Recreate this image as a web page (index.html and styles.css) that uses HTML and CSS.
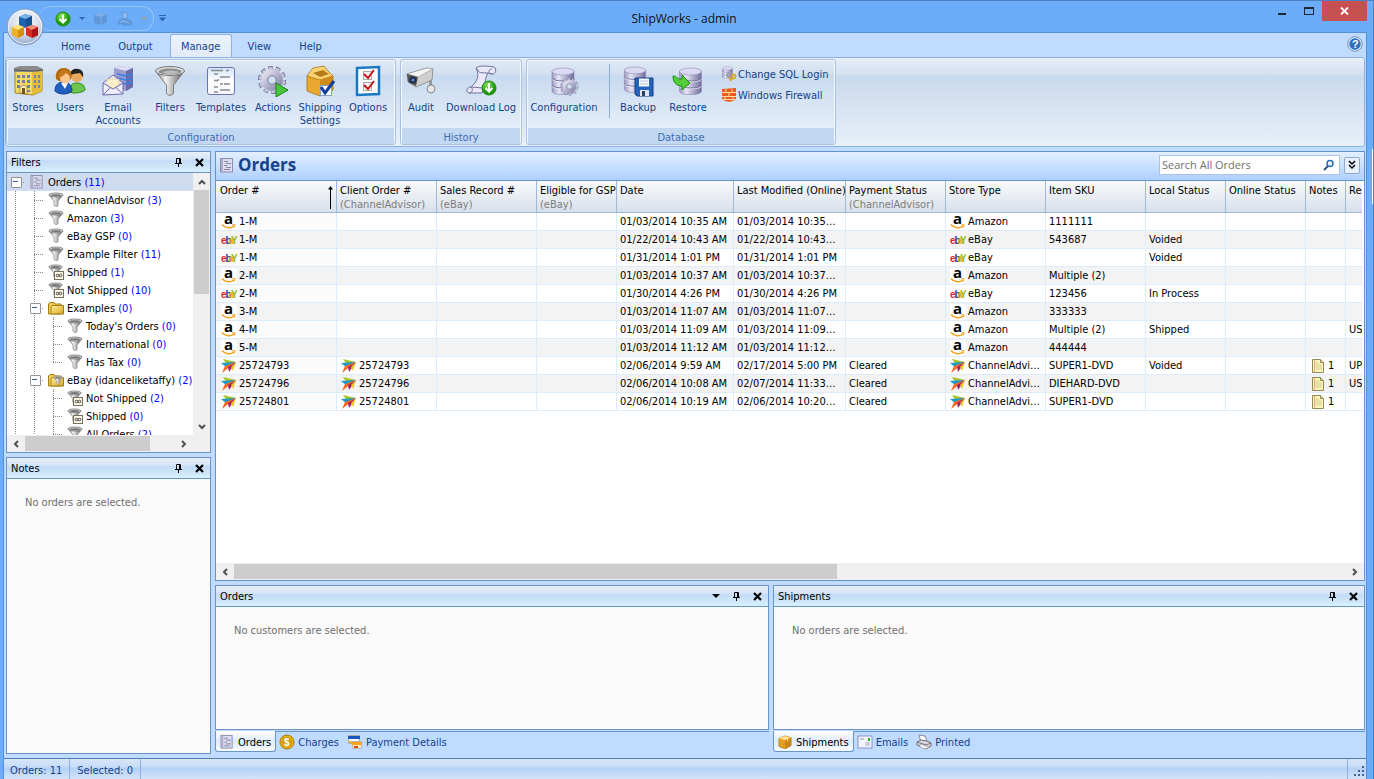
FILE: index.html
```html
<!DOCTYPE html>
<html lang="en">
<head>
<meta charset="utf-8">
<title>ShipWorks - admin</title>
<link rel="stylesheet" href="styles.css">
</head>
<body>
<svg class="defs" width="0" height="0" aria-hidden="true">
  <defs>
    <linearGradient id="gMetal"><stop offset="0" stop-color="#777"/><stop offset=".35" stop-color="#f4f4f4"/><stop offset="1" stop-color="#555"/></linearGradient>
    <linearGradient id="gDb"><stop offset="0" stop-color="#9b98bd"/><stop offset=".3" stop-color="#e6e5f6"/><stop offset="1" stop-color="#716c9c"/></linearGradient>
    <linearGradient id="gGear" x2="1" y2="1"><stop offset="0" stop-color="#e2e2f0"/><stop offset="1" stop-color="#8a88ac"/></linearGradient>
    <radialGradient id="gGreen" cx=".4" cy=".3"><stop offset="0" stop-color="#8be95c"/><stop offset="1" stop-color="#1f9a0c"/></radialGradient>
    <linearGradient id="gGold" x2="1" y2="1"><stop offset="0" stop-color="#fff3a0"/><stop offset="1" stop-color="#d9a21c"/></linearGradient>
    <radialGradient id="gOrb" cx=".5" cy=".3" r=".7"><stop offset="0" stop-color="#fff"/><stop offset=".6" stop-color="#d3dceb"/><stop offset="1" stop-color="#8ea6c8"/></radialGradient>
    <linearGradient id="gPage" x2="0" y2="1"><stop offset="0" stop-color="#cfe6fb"/><stop offset=".5" stop-color="#fff"/><stop offset="1" stop-color="#f4f4fb"/></linearGradient>
  </defs>
  <symbol id="i-orb" viewBox="0 0 38 38">
    <circle cx="19" cy="19" r="18" fill="url(#gOrb)" stroke="#7f9bc4"/><circle cx="19" cy="19" r="16.500" fill="none" stroke="#fff" stroke-opacity=".8"/>
    <path d="M13 9l6-3 7 2v9l-7 3-6-3z" fill="#1c62ad"/><path d="M13 9l6-3 7 2-6 3z" fill="#7ab4e6"/><path d="M20 11l6-3v9l-6 3z" fill="#134f93"/>
    <path d="M6 19l6-2 6 2v8l-6 3-6-3z" fill="#f0b020"/><path d="M6 19l6-2 6 2-6 3z" fill="#ffe57a"/><path d="M12 22l6-3v8l-6 3z" fill="#d68f10"/>
    <path d="M20 19l6-2 6 2v8l-6 3-6-3z" fill="#d92a20"/><path d="M20 19l6-2 6 2-6 3z" fill="#f68a7c"/><path d="M26 22l6-3v8l-6 3z" fill="#ad1212"/>
  </symbol>
  <symbol id="i-down" viewBox="0 0 16 16"><circle cx="8" cy="8" r="7" fill="url(#gGreen)" stroke="#1b8a12"/><path d="M8 3.500v8M4.500 8L8 11.500 11.500 8" fill="none" stroke="#fff" stroke-width="2"/></symbol>
  <symbol id="i-ghostbox" viewBox="0 0 16 16"><path d="M1 4l7-2 6 1v8l-6 3-7-2z" fill="#5f97d8"/><path d="M1 4l7-2 6 1-6 3z" fill="#7fb1ec"/><path d="M8 6v8" stroke="#79aae6" fill="none"/></symbol>
  <symbol id="i-ghostprint" viewBox="0 0 18 16"><path d="M5 1l5 1 1 5-5 1z" fill="#8bb9f0" stroke="#6799d6"/><path d="M1 10l4-3 6 1 5 3-2 4-4-1-3 1-2-2-4 1z" fill="#5f97d8"/><path d="M3 11l4-1 5 2" stroke="#94c0f3" fill="none"/></symbol>
  <symbol id="i-stores" viewBox="0 0 32 32">
    <path d="M3 4l18-1 9 2v21l-9 4-18-2z" fill="#f6d865" stroke="#a8842a"/><path d="M20 5l10 1v20l-10 4z" fill="#e5bb3c"/><path d="M2 3l6-2h17l6 3v2l-10 1H2z" fill="#8b8b8b"/><path d="M2 5l19 1 10-1" stroke="#555" fill="none"/>
    <path d="M5 10h3v3H5zM10 10h3v3h-3zM15 10h3v3h-3zM5 15h3v3H5zM10 15h3v3h-3zM15 15h3v3h-3zM5 20h3v3H5zM15 20h3v3h-3zM22 10h2v3h-2zM26 10h2v3h-2zM22 15h2v3h-2zM26 15h2v3h-2zM22 20h2v3h-2zM26 20h2v3h-2zM15 25h3v2h-3z" fill="#6f82a8"/>
    <path d="M8 22l4-2 3 2v7l-7-1z" fill="#fff0b0" stroke="#80621a" stroke-width=".6"/><path d="M10 23h3v6h-3z" fill="#71531a"/>
  </symbol>
  <symbol id="i-users" viewBox="0 0 32 32">
    <path d="M15 27c0-6 3-9 8-9s8 3 8 7c-3 3-12 4-16 2z" fill="#6cc54c" stroke="#2e8a23"/><circle cx="23" cy="11" r="6" fill="#e9a85d"/><path d="M16 11c0-5 3-8 8-7 4 0 6 4 5 8l-3-4c-4 1-7 0-10 3z" fill="#222"/>
    <path d="M1 26c0-7 4-9 9-9s8 4 8 9c-4 4-13 4-17 0z" fill="#1f5fc0" stroke="#133d8b"/><path d="M7 18l4 6 3-6z" fill="#f3f6fc"/><path d="M2 14C1 7 4 3 10 3s9 5 7 11l-3 2H5z" fill="#b36a12"/><ellipse cx="11" cy="13" rx="5" ry="5.500" fill="#ffc58c"/><path d="M5 12c3 0 5-2 7-4l4 3c0-5-3-6-6-6s-6 3-5 7z" fill="#c47a1a"/>
  </symbol>
  <symbol id="i-email" viewBox="0 0 32 32">
    <path d="M12 3l6-2 13 2v19l-7 4-12-3z" fill="#9b9bce"/><path d="M12 3l6-2 13 2-7 3z" fill="#dcdcf2"/><path d="M24 6l7-3v19l-7 4z" fill="#6b6aab"/><path d="M15 9l9 2 6-2M15 13l9 2 6-2M17 17l7 2 6-2" stroke="#3a7fe0" stroke-width="1.500" fill="none"/>
    <path d="M1 18l10-8 10 8v11l-20 1z" fill="#eeeefb" stroke="#6d6bb0"/><path d="M5 14h12v6l-6 4-6-4z" fill="#fff0cc" stroke="#d6ba88" stroke-width=".6"/><path d="M1 18l10 6 10-6M1 30l8-8M21 29l-8-7" fill="none" stroke="#6d6bb0"/>
  </symbol>
  <symbol id="i-funnel" viewBox="0 0 32 32"><path d="M1.500 6l11 14v8c1 3 6 3 7 0v-8l11-14z" fill="url(#gMetal)" stroke="#666" stroke-width=".8"/><ellipse cx="16" cy="6" rx="14.500" ry="4.500" fill="#ddd" stroke="#777"/><ellipse cx="16" cy="6.500" rx="11.500" ry="3" fill="#8b8b8b"/><path d="M8 7c5 3 11 3 17 0-5-2-11-2-17 0z" fill="#bbb"/></symbol>
  <symbol id="i-template" viewBox="0 0 32 32"><rect x="2.500" y="2.500" width="27" height="27" rx="2" fill="url(#gPage)" stroke="#6d73b0"/><path d="M6 5.500h12M21 5.500h3M9 9h4M15 12h10M12 15h2M9 15.500h4M15 19h3M19 19h6M9 22h4M15 25h10M9 27h4" stroke="#8a8a90" stroke-width="1.600"/></symbol>
  <symbol id="gear" viewBox="0 0 32 32"><circle cx="16" cy="16" r="12.500" fill="none" stroke="#77759c" stroke-width="5" pathLength="20" stroke-dasharray="1.200 .8"/><circle cx="16" cy="16" r="12" fill="none" stroke="#c7c6dd" stroke-width="4" pathLength="20" stroke-dasharray="1 1" stroke-dashoffset="-.1"/><circle cx="16" cy="16" r="8" fill="none" stroke="url(#gGear)" stroke-width="7"/><circle cx="16" cy="16" r="4.500" fill="#d2dff0" stroke="#77759c"/></symbol>
  <symbol id="i-actions" viewBox="0 0 32 32"><use href="#gear" width="30" height="30"/><path d="M19 18l12 7-12 7z" fill="#47c63c" stroke="#188515"/></symbol>
  <symbol id="i-shipping" viewBox="0 0 32 32"><path d="M3 11l12-3 14 3v14l-13 6-13-5z" fill="#eaa92e" stroke="#9a6510" stroke-width=".7"/><path d="M5 8l4-5 11-2 4 5 5 5-13 4-13-4z" fill="#fbd471" stroke="#9a6510" stroke-width=".7"/><path d="M9 8l10-3 6 4-9 3z" fill="#b47b18"/><path d="M16 15l13-4v14l-13 6z" fill="#d08b18"/><rect x="16.500" y="20.500" width="11" height="10" fill="#f6faff" stroke="#8ba1bd"/><path d="M17 22l4 6 9-12" fill="none" stroke="#113d9b" stroke-width="3"/></symbol>
  <symbol id="i-options" viewBox="0 0 32 32"><path d="M5 3l22-1v27l-22 1z" fill="#fff" stroke="#1979c4" stroke-width="2.500"/><rect x="11.500" y="6.500" width="8" height="8" fill="#f4f4f4" stroke="#aaa"/><rect x="11.500" y="17.500" width="8" height="8" fill="#f4f4f4" stroke="#aaa"/><path d="M12 9l4 4 6-8M12 20l4 4 6-8" fill="none" stroke="#c4161c" stroke-width="2"/></symbol>
  <symbol id="i-audit" viewBox="0 0 32 32"><path d="M25 14l1 7-3 3" fill="none" stroke="#999" stroke-width="3"/><circle cx="26" cy="24" r="4" fill="#e6e6e6" stroke="#888"/><path d="M2 9L22 3l6 1-1 11-16 7-8-5z" fill="#cfcfcf" stroke="#777" stroke-width=".7"/><path d="M2 9l20-6 6 1-15 8z" fill="#f4f4f4" stroke="#888" stroke-width=".5"/><path d="M2 9l11 3-2 9-8-4z" fill="#555"/><circle cx="8" cy="15" r="3.500" fill="#1c2c4c"/><circle cx="8" cy="15" r="1.500" fill="#5a8ed8"/></symbol>
  <symbol id="i-log" viewBox="0 0 32 32"><path d="M11 3c3-3 13-2 18-1 3 2 2 7-2 7l-4-1c-4 6-2 14-6 20H4c-4-1-2-6 2-6 6-5 9-11 5-19z" fill="#e9e9f7" stroke="#716f9c"/><path d="M27 9c-4 0-4-5 0-5M4 28c4 0 4-5 2-6l12 1M12 4c3 3 0 4 11 4" fill="none" stroke="#716f9c"/><circle cx="24" cy="23" r="7" fill="url(#gGreen)" stroke="#1b8a12"/><path d="M24 18v8M20.500 23l3.500 3.500 3.500-3.500" fill="none" stroke="#fff" stroke-width="2"/></symbol>
  <symbol id="db" viewBox="0 0 24 28"><path d="M1 4v20c0 5 22 5 22 0V4z" fill="url(#gDb)" stroke="#8985b2" stroke-width=".6"/><path d="M1 11c0 4 22 4 22 0M1 18c0 4 22 4 22 0" fill="none" stroke="#77739f"/><path d="M1 12c0 4 22 4 22 0M1 19c0 4 22 4 22 0" fill="none" stroke="#efeffb" stroke-width=".7"/><ellipse cx="12" cy="4.500" rx="11" ry="3.500" fill="#dcdaf0" stroke="#9a96c0" stroke-width=".7"/></symbol>
  <symbol id="i-dbgear" viewBox="0 0 32 32"><use href="#db" x="3" y="2" width="24" height="28"/><use href="#gear" x="12" y="12" width="19" height="19"/></symbol>
  <symbol id="i-backup" viewBox="0 0 32 32"><use href="#db" x="1" y="1" width="24" height="27"/><path d="M13 13h18v18H15l-2-2z" fill="#2464be" stroke="#173f80"/><path d="M17 13.500h10v8H17z" fill="#f4f8ff"/><path d="M18 16h8M18 19h8" stroke="#b4c6e0"/><path d="M18 25h9v6h-9z" fill="#dde3ec"/><path d="M20 26h3v5h-3z" fill="#2b3f64"/></symbol>
  <symbol id="i-restore" viewBox="0 0 32 32"><use href="#db" x="6" y="2" width="25" height="28"/><path d="M1 11c4 0 5 4 9 3v-4l8 8-8 7v-4C4 21 1 17 1 11z" fill="#55cd3a" stroke="#1c8a14"/></symbol>
  <symbol id="i-sql" viewBox="0 0 16 16"><use href="#db" x="1" y="0" width="11" height="13"/><circle cx="8" cy="9" r="2" fill="none" stroke="#999" stroke-width="1.500"/><circle cx="12.500" cy="10.500" r="2" fill="none" stroke="#d9a21c" stroke-width="1.500"/><path d="M8 11l2 4M12 12l-3 3" stroke="#d9a21c" stroke-width="1.500"/></symbol>
  <symbol id="i-wall" viewBox="0 0 16 16"><path d="M1 2l14-1v10c0 2-3 3-7 4-4-1-7-2-7-4z" fill="#ee5a1c"/><path d="M1 5.500h14M1 9.500h14M2 12.500h12M5 2v3.500M11 2v3.500M8 5.500v4M4 9.500v3M12 9.500v3" stroke="#ffd9a6" fill="none"/></symbol>
  <symbol id="i-report" viewBox="0 0 14 15"><rect x=".5" y=".5" width="12" height="13.500" fill="#dcdcee" stroke="#8f8cac"/><path d="M1 1h2v13H1z" fill="#b0adcc"/><path d="M4 3.500h4M6 5.500h5M4 7.500h3M6 9.500h5M4 11.500h6" stroke="#8785a4"/></symbol>
  <symbol id="i-fun16" viewBox="0 0 16 16"><path d="M1 3l5 6v4c1 2 4 2 4 0V9l5-6z" fill="url(#gMetal)" stroke="#6b6b6b" stroke-width=".6"/><ellipse cx="8" cy="3" rx="7" ry="2" fill="#d4d4d4" stroke="#666" stroke-width=".7"/><ellipse cx="8" cy="3.200" rx="5" ry="1" fill="#777"/></symbol>
  <symbol id="i-funinf" viewBox="0 0 16 16"><use href="#i-fun16" width="15" height="15"/><rect x="6.500" y="7.500" width="9" height="8" fill="#fffbe9" stroke="#766f5c"/><circle cx="9.500" cy="11.500" r="1.300" fill="none" stroke="#222" stroke-width=".8"/><circle cx="12.500" cy="11.500" r="1.300" fill="none" stroke="#222" stroke-width=".8"/></symbol>
  <symbol id="i-folder" viewBox="0 0 16 16"><path d="M.5 4l1.500-1.500h4L7 4h6v10H.5z" fill="#f0cf57" stroke="#a37d12"/><path d="M3 7l1-1.500h11.500V14H3z" fill="url(#gGold)" stroke="#a37d12"/></symbol>
  <symbol id="i-folderfun" viewBox="0 0 16 16"><use href="#i-folder" width="16" height="16"/><use href="#i-fun16" x="5" y="3" width="10" height="11"/></symbol>
  <symbol id="i-amazon" viewBox="0 0 16 16"><rect width="16" height="16" rx="3" fill="#fff"/><text x="3" y="10" class="glyph-a">a</text><path d="M1 10.500c3 4 9 4 12 1.500" fill="none" stroke="#f7a01d" stroke-width="1.500"/><path d="M11 11l3-.5-.5 3" fill="none" stroke="#f7a01d"/></symbol>
  <symbol id="i-ebay" viewBox="0 0 16 16"><text x="0" y="11.500" class="glyph-ebay"><tspan fill="#e5232b">e</tspan><tspan x="4.500" fill="#1d3a9e">b</tspan><tspan x="7.500" fill="#f2af12">a</tspan><tspan x="10" fill="#8db811">Y</tspan></text></symbol>
  <symbol id="i-ca" viewBox="0 0 16 16"><path d="M2 1l13 3-9 3z" fill="#a8c32c"/><path d="M0 5l15-1L5 9z" fill="#169bc8"/><path d="M15 4L1 15l3-7z" fill="#f26b21"/><path d="M15 4L8 14 7 9z" fill="#a51f6c"/><path d="M15 4l-3 9-2-4z" fill="#f0c41c"/></symbol>
  <symbol id="i-note" viewBox="0 0 14 16"><path d="M1.500 1.500h8l3 3v10h-11z" fill="#fbf5b8" stroke="#8f8a5a"/><path d="M9.500 1.500v3h3" fill="#ddd58e" stroke="#8f8a5a"/><path d="M4 5h4M4 7h7M4 9h7M4 11h7" stroke="#d6cd93"/><path d="M3.500 2v12" stroke="#e89b7b" stroke-width=".8"/></symbol>
  <symbol id="i-coin" viewBox="0 0 16 16"><circle cx="8" cy="8" r="7" fill="#edb70e" stroke="#a47708"/><circle cx="8" cy="8" r="5.300" fill="#d69a05"/><text x="5" y="12" class="glyph-coin">$</text></symbol>
  <symbol id="i-pay" viewBox="0 0 16 16"><path d="M1.500 1.500h11v8h-11z" fill="#fff" stroke="#aaa"/><path d="M1 2h12v3H1z" fill="#1a56b8"/><path d="M2 7h5v2H2z" fill="#f2b429"/><path d="M5.500 7.500h9v7h-9z" fill="#ffe9c4" stroke="#bbb"/><path d="M5 8h10v3H5z" fill="#f8a51c"/><path d="M7 12h4v2H7z" fill="#e2451c"/></symbol>
  <symbol id="i-box" viewBox="0 0 16 16"><path d="M1 4l7-3 7 2v9l-7 4-7-3z" fill="#e3a021" stroke="#93640b" stroke-width=".6"/><path d="M1 4l7-3 7 2-7 3z" fill="#ffd976"/><path d="M8 6l7-3v9l-7 4z" fill="#c98510"/><path d="M5 2.500l6 2v3" fill="none" stroke="#fff1b8"/></symbol>
  <symbol id="i-mail" viewBox="0 0 16 14"><rect x="1" y="1" width="14" height="12" fill="#f3f5ff" stroke="#8b92c4"/><path d="M3 4h4" stroke="#999"/><path d="M11 3h2v3h-2z" fill="#22b222"/><path d="M8 8h5M8 10h5" stroke="#a8a8b8"/></symbol>
  <symbol id="i-printer" viewBox="0 0 16 16"><path d="M3 1l6 1 2 5-6 1z" fill="#fff" stroke="#8a8a9a"/><path d="M1 8l4-2 6 1 4 2v3l-5 3-9-4z" fill="#d4d4e0" stroke="#707080"/><path d="M1 8l9 3 5-2" fill="none" stroke="#777"/><path d="M4 10l6 2 4 1-5 2-5-2z" fill="#f6f6fb" stroke="#888" stroke-width=".5"/></symbol>
  <symbol id="i-help" viewBox="0 0 16 16"><circle cx="8" cy="8" r="7.300" fill="#d8e8fa" stroke="#7893b6"/><circle cx="8" cy="8" r="5.700" fill="#2f70bf"/><text x="5" y="12" class="glyph-help">?</text></symbol>
  <symbol id="i-search" viewBox="0 0 12 12"><circle cx="7" cy="4.500" r="3" fill="#eaf6ff" stroke="#2a6db4" stroke-width="1.500"/><path d="M5 7L1 11" stroke="#2a4f8c" stroke-width="2"/></symbol>
  <symbol id="i-pin" viewBox="0 0 9 11"><path d="M2.500 6V1.500h4V6M5.500 1v5M1 6.500h7M4.500 7v3" fill="none" stroke="#000"/></symbol>
  <symbol id="i-x" viewBox="0 0 9 9"><path d="M1 1l7 7M8 1L1 8" stroke="#000" stroke-width="2.200"/></symbol>
  <symbol id="i-chev" viewBox="0 0 8 8"><path d="M1 2l3 3 3-3" fill="none" stroke="#505050" stroke-width="2"/></symbol>
  <symbol id="i-dbl" viewBox="0 0 8 10"><path d="M1 1l3 3 3-3M1 5l3 3 3-3" fill="none" stroke="#000" stroke-width="1.500"/></symbol>
  <symbol id="i-tri" viewBox="0 0 8 4"><path d="M0 0h8L4 4z"/></symbol>
</svg>

<div class="window">
  <header class="titlebar">
    <div class="quick">
      <button aria-label="Download"><svg width="16" height="16"><use href="#i-down"/></svg></button>
      <button class="drop" aria-label="Download options"><svg width="6" height="3"><use href="#i-tri"/></svg></button>
      <button aria-label="Ship"><svg width="16" height="16"><use href="#i-ghostbox"/></svg></button>
      <button aria-label="Print"><svg width="18" height="16"><use href="#i-ghostprint"/></svg></button>
      <button class="drop pale" aria-label="Print options"><svg width="6" height="3"><use href="#i-tri"/></svg></button>
    </div>
    <button class="more" aria-label="Customize toolbar"><svg width="7" height="7" viewBox="0 0 7 7"><path d="M0 .5h7" stroke="#2c62b0"/><path d="M0 2.500h7L3.500 6.500z" fill="#2c62b0"/></svg></button>
    <h1 class="title">ShipWorks - admin</h1>
    <div class="winbtns">
      <button class="wb" aria-label="Minimize"><span class="min"></span></button>
      <button class="wb" aria-label="Maximize"><span class="max"></span></button>
      <button class="wb close" aria-label="Close"><svg width="9" height="8" viewBox="0 0 9 8"><path d="M1 .5l7 7M8 .5l-7 7" stroke="#fff" stroke-width="1.800"/></svg></button>
    </div>
    <button class="orb" aria-label="Application menu"><svg width="38" height="38"><use href="#i-orb"/></svg></button>
  </header>

  <div class="frame">
    <nav class="tabs">
      <button>Home</button><button>Output</button><button class="on">Manage</button><button>View</button><button>Help</button>
      <button class="help" aria-label="Help topics"><svg width="16" height="16"><use href="#i-help"/></svg></button>
    </nav>

    <div class="ribbon">
      <section class="group">
        <div class="tools g-config">
          <button><svg><use href="#i-stores"/></svg>Stores</button>
          <button><svg><use href="#i-users"/></svg>Users</button>
          <button><svg><use href="#i-email"/></svg>Email Accounts</button>
          <button><svg><use href="#i-funnel"/></svg>Filters</button>
          <button><svg><use href="#i-template"/></svg>Templates</button>
          <button><svg><use href="#i-actions"/></svg>Actions</button>
          <button><svg><use href="#i-shipping"/></svg>Shipping Settings</button>
          <button><svg><use href="#i-options"/></svg>Options</button>
        </div>
        <h2>Configuration</h2>
      </section>
      <section class="group">
        <div class="tools g-history">
          <button><svg><use href="#i-audit"/></svg>Audit</button>
          <button><svg><use href="#i-log"/></svg>Download Log</button>
        </div>
        <h2>History</h2>
      </section>
      <section class="group">
        <div class="tools g-db">
          <button><svg><use href="#i-dbgear"/></svg>Configuration</button>
          <span class="sep"></span>
          <button><svg><use href="#i-backup"/></svg>Backup</button>
          <button><svg><use href="#i-restore"/></svg>Restore</button>
          <div class="stack">
            <button class="small"><svg><use href="#i-sql"/></svg>Change SQL Login</button>
            <button class="small"><svg><use href="#i-wall"/></svg>Windows Firewall</button>
          </div>
        </div>
        <h2>Database</h2>
      </section>
    </div>

    <main class="work">
      <aside class="left">
        <section class="pane">
          <div class="phead"><h2>Filters</h2><button aria-label="Pin"><svg width="9" height="11"><use href="#i-pin"/></svg></button><button aria-label="Close"><svg width="9" height="9"><use href="#i-x"/></svg></button></div>
          <div class="treebox">
            <ul class="tree">
              <li class="sel"><i class="c box first"></i><svg><use href="#i-report"/></svg>Orders <b>(11)</b></li>
              <li><i class="c v"></i><i class="c v h"></i><svg><use href="#i-fun16"/></svg>ChannelAdvisor <b>(3)</b></li>
              <li><i class="c v"></i><i class="c v h"></i><svg><use href="#i-fun16"/></svg>Amazon <b>(3)</b></li>
              <li><i class="c v"></i><i class="c v h"></i><svg><use href="#i-fun16"/></svg>eBay GSP <b>(0)</b></li>
              <li><i class="c v"></i><i class="c v h"></i><svg><use href="#i-fun16"/></svg>Example Filter <b>(11)</b></li>
              <li><i class="c v"></i><i class="c v h"></i><svg><use href="#i-funinf"/></svg>Shipped <b>(1)</b></li>
              <li><i class="c v"></i><i class="c v h"></i><svg><use href="#i-funinf"/></svg>Not Shipped <b>(10)</b></li>
              <li><i class="c v"></i><i class="c v h box"></i><svg><use href="#i-folder"/></svg>Examples <b>(0)</b></li>
              <li><i class="c v"></i><i class="c v"></i><i class="c v h"></i><svg><use href="#i-fun16"/></svg>Today's Orders <b>(0)</b></li>
              <li><i class="c v"></i><i class="c v"></i><i class="c v h"></i><svg><use href="#i-fun16"/></svg>International <b>(0)</b></li>
              <li><i class="c v"></i><i class="c v"></i><i class="c v h end"></i><svg><use href="#i-fun16"/></svg>Has Tax <b>(0)</b></li>
              <li><i class="c v"></i><i class="c v h box"></i><svg><use href="#i-folderfun"/></svg>eBay (idanceliketaffy) <b>(2)</b></li>
              <li><i class="c v"></i><i class="c v"></i><i class="c v h"></i><svg><use href="#i-funinf"/></svg>Not Shipped <b>(2)</b></li>
              <li><i class="c v"></i><i class="c v"></i><i class="c v h"></i><svg><use href="#i-funinf"/></svg>Shipped <b>(0)</b></li>
              <li><i class="c v"></i><i class="c v"></i><i class="c v h"></i><svg><use href="#i-fun16"/></svg>All Orders <b>(2)</b></li>
            </ul>
            <div class="vbar"><svg class="up" width="8" height="8"><use href="#i-chev"/></svg><span></span><svg width="8" height="8"><use href="#i-chev"/></svg></div>
            <div class="hbar tree-h"><svg class="lt" width="8" height="8"><use href="#i-chev"/></svg><span></span><svg class="rt" width="8" height="8"><use href="#i-chev"/></svg></div>
          </div>
        </section>
        <section class="pane">
          <div class="phead"><h2>Notes</h2><button aria-label="Pin"><svg width="9" height="11"><use href="#i-pin"/></svg></button><button aria-label="Close"><svg width="9" height="9"><use href="#i-x"/></svg></button></div>
          <p class="empty">No orders are selected.</p>
        </section>
      </aside>

      <div class="center">
        <section class="grid">
          <div class="ghead">
            <svg width="14" height="15"><use href="#i-report"/></svg><h2>Orders</h2>
            <label class="search"><input type="text" placeholder="Search All Orders" aria-label="Search All Orders"><svg width="12" height="12"><use href="#i-search"/></svg></label>
            <button class="dbl" aria-label="Advanced search"><svg width="8" height="10"><use href="#i-dbl"/></svg></button>
          </div>
          <div class="tablebox">
            <table>
              <colgroup><col class="w121"><col class="w100"><col class="w100"><col class="w80"><col class="w117"><col class="w112"><col class="w100"><col class="w100"><col class="w100"><col class="w80"><col class="w80"><col class="w40"><col class="w80"></colgroup>
              <thead><tr>
                <th class="sort">Order #<svg width="5" height="23" viewBox="0 0 5 23"><path d="M2.500 1v22" stroke="#000"/><path d="M0 3.500L2.500 0 5 3.500z"/></svg></th><th>Client Order #<small>(ChannelAdvisor)</small></th><th>Sales Record #<small>(eBay)</small></th><th>Eligible for GSP<small>(eBay)</small></th><th>Date</th><th>Last Modified (Online)</th><th>Payment Status<small>(ChannelAdvisor)</small></th><th>Store Type</th><th>Item SKU</th><th>Local Status</th><th>Online Status</th><th>Notes</th><th>Requested</th>
              </tr></thead>
              <tbody>
                <tr><td><svg><use href="#i-amazon"/></svg>1-M</td><td></td><td></td><td></td><td>01/03/2014 10:35 AM</td><td>01/03/2014 10:35 AM</td><td></td><td><svg><use href="#i-amazon"/></svg>Amazon</td><td>1111111</td><td></td><td></td><td></td><td></td></tr>
                <tr><td><svg><use href="#i-ebay"/></svg>1-M</td><td></td><td></td><td></td><td>01/22/2014 10:43 AM</td><td>01/22/2014 10:43 AM</td><td></td><td><svg><use href="#i-ebay"/></svg>eBay</td><td>543687</td><td>Voided</td><td></td><td></td><td></td></tr>
                <tr><td><svg><use href="#i-ebay"/></svg>1-M</td><td></td><td></td><td></td><td>01/31/2014 1:01 PM</td><td>01/31/2014 1:01 PM</td><td></td><td><svg><use href="#i-ebay"/></svg>eBay</td><td></td><td>Voided</td><td></td><td></td><td></td></tr>
                <tr><td><svg><use href="#i-amazon"/></svg>2-M</td><td></td><td></td><td></td><td>01/03/2014 10:37 AM</td><td>01/03/2014 10:37 AM</td><td></td><td><svg><use href="#i-amazon"/></svg>Amazon</td><td>Multiple (2)</td><td></td><td></td><td></td><td></td></tr>
                <tr><td><svg><use href="#i-ebay"/></svg>2-M</td><td></td><td></td><td></td><td>01/30/2014 4:26 PM</td><td>01/30/2014 4:26 PM</td><td></td><td><svg><use href="#i-ebay"/></svg>eBay</td><td>123456</td><td>In Process</td><td></td><td></td><td></td></tr>
                <tr><td><svg><use href="#i-amazon"/></svg>3-M</td><td></td><td></td><td></td><td>01/03/2014 11:07 AM</td><td>01/03/2014 11:07 AM</td><td></td><td><svg><use href="#i-amazon"/></svg>Amazon</td><td>333333</td><td></td><td></td><td></td><td></td></tr>
                <tr><td><svg><use href="#i-amazon"/></svg>4-M</td><td></td><td></td><td></td><td>01/03/2014 11:09 AM</td><td>01/03/2014 11:09 AM</td><td></td><td><svg><use href="#i-amazon"/></svg>Amazon</td><td>Multiple (2)</td><td>Shipped</td><td></td><td></td><td>USPS</td></tr>
                <tr><td><svg><use href="#i-amazon"/></svg>5-M</td><td></td><td></td><td></td><td>01/03/2014 11:12 AM</td><td>01/03/2014 11:12 AM</td><td></td><td><svg><use href="#i-amazon"/></svg>Amazon</td><td>444444</td><td></td><td></td><td></td><td></td></tr>
                <tr><td><svg><use href="#i-ca"/></svg>25724793</td><td><svg><use href="#i-ca"/></svg>25724793</td><td></td><td></td><td>02/06/2014 9:59 AM</td><td>02/17/2014 5:00 PM</td><td>Cleared</td><td><svg><use href="#i-ca"/></svg>ChannelAdvisor</td><td>SUPER1-DVD</td><td>Voided</td><td></td><td><svg><use href="#i-note"/></svg>1</td><td>UPS</td></tr>
                <tr><td><svg><use href="#i-ca"/></svg>25724796</td><td><svg><use href="#i-ca"/></svg>25724796</td><td></td><td></td><td>02/06/2014 10:08 AM</td><td>02/07/2014 11:33 AM</td><td>Cleared</td><td><svg><use href="#i-ca"/></svg>ChannelAdvisor</td><td>DIEHARD-DVD</td><td></td><td></td><td><svg><use href="#i-note"/></svg>1</td><td>USPS</td></tr>
                <tr><td><svg><use href="#i-ca"/></svg>25724801</td><td><svg><use href="#i-ca"/></svg>25724801</td><td></td><td></td><td>02/06/2014 10:19 AM</td><td>02/06/2014 10:20 AM</td><td>Cleared</td><td><svg><use href="#i-ca"/></svg>ChannelAdvisor</td><td>SUPER1-DVD</td><td></td><td></td><td><svg><use href="#i-note"/></svg>1</td><td></td></tr>
              </tbody>
            </table>
          </div>
          <div class="hbar grid-h"><svg class="lt" width="8" height="8"><use href="#i-chev"/></svg><span></span><svg class="rt" width="8" height="8"><use href="#i-chev"/></svg></div>
        </section>

        <div class="bottom">
          <div class="dock">
            <section class="pane">
              <div class="phead"><h2>Orders</h2><button aria-label="Menu"><svg width="8" height="4"><use href="#i-tri"/></svg></button><button aria-label="Pin"><svg width="9" height="11"><use href="#i-pin"/></svg></button><button aria-label="Close"><svg width="9" height="9"><use href="#i-x"/></svg></button></div>
              <p class="empty">No customers are selected.</p>
            </section>
            <div class="dtabs"><button class="on"><svg width="16" height="14"><use href="#i-report"/></svg>Orders</button><button><svg width="16" height="16"><use href="#i-coin"/></svg>Charges</button><button><svg width="16" height="16"><use href="#i-pay"/></svg>Payment Details</button></div>
          </div>
          <div class="dock">
            <section class="pane">
              <div class="phead"><h2>Shipments</h2><button aria-label="Pin"><svg width="9" height="11"><use href="#i-pin"/></svg></button><button aria-label="Close"><svg width="9" height="9"><use href="#i-x"/></svg></button></div>
              <p class="empty">No orders are selected.</p>
            </section>
            <div class="dtabs"><button class="on"><svg width="16" height="14"><use href="#i-box"/></svg>Shipments</button><button><svg width="16" height="14"><use href="#i-mail"/></svg>Emails</button><button><svg width="16" height="16"><use href="#i-printer"/></svg>Printed</button></div>
          </div>
        </div>
      </div>
    </main>

    <footer class="status"><span>Orders: 11</span><span>Selected: 0</span><div class="grip"><svg width="12" height="12" viewBox="0 0 12 12"><path d="M8 0h2v2H8zM4 4h2v2H4zM8 4h2v2H8zM0 8h2v2H0zM4 8h2v2H4zM8 8h2v2H8z" fill="#44618f"/></svg></div></footer>
  </div>
  <span class="edge"></span>
</div>
</body>
</html>
```

FILE: styles.css
```css
* { box-sizing: border-box; }

body {
  margin: 0;
  font: 11px/13px "DejaVu Sans Condensed", "DejaVu Sans", sans-serif;
  color: #000;
}

button, input { font: inherit; color: inherit; }
button { border: 0; padding: 0; background: none; }
h1, h2, p, ul { margin: 0; padding: 0; font-size: inherit; font-weight: normal; }
svg { display: block; flex: none; }
.defs { position: absolute; }

.glyph-a { font: bold 15px "Open Sans", sans-serif; }
.glyph-ebay { font: bold 10px "Liberation Sans Narrow", "Liberation Sans", sans-serif; }
.glyph-coin { font: bold 10px "Liberation Sans", sans-serif; fill: #fff; }
.glyph-help { font: bold 11px "Liberation Sans", sans-serif; fill: #fff; }

.window {
  position: relative;
  display: flex;
  flex-direction: column;
  height: 100vh;
  min-height: 600px;
  background: #6badf8;
  border-top: 1px solid #4a81c4;
  border-right: 1px solid #4a81c4;
  overflow: hidden;
}

/* Title bar */
.titlebar {
  position: relative;
  flex: none;
  display: flex;
  align-items: flex-start;
  height: 31px;
}
.quick {
  display: flex;
  align-items: center;
  gap: 8px;
  width: 115px;
  height: 25px;
  margin: 5px 0 0 39px;
  padding-left: 16px;
  border: 1px solid #9ac5f7;
  border-left: 0;
  border-radius: 12px;
}
.quick .drop { fill: #2c62b0; }
.quick .pale { fill: #a29a8c; margin-left: -2px; }
.more { margin: 14px 0 0 5px; }
.title {
  position: absolute;
  left: 200px;
  right: 205px;
  top: 10px;
  text-align: center;
  font: 12px/16px "Open Sans", sans-serif;
  color: #111;
}
.winbtns { display: flex; margin-left: auto; margin-right: 6px; }
.wb { display: flex; justify-content: center; width: 27px; height: 20px; }
.min { width: 8px; height: 2px; margin-top: 12px; background: #1f2630; }
.max { width: 10px; height: 8px; margin-top: 6px; border: 1px solid #1f2630; border-top-width: 2px; }
.wb.close { width: 45px; align-items: center; background: #c75050; }
.orb { position: absolute; left: 6px; top: 7px; z-index: 2; }

.frame {
  flex: 1;
  min-height: 0;
  display: flex;
  flex-direction: column;
  margin: 0 6px 0 3px;
  background: #bfdbff;
  border: 1px solid #5590d6;
  border-bottom: 0;
}

/* Ribbon */
.tabs {
  flex: none;
  display: flex;
  align-items: flex-end;
  height: 24px;
  padding-left: 43px;
  color: #15428b;
}
.tabs button { min-width: 51px; height: 23px; padding: 1px 14px 0; }
.tabs button.on {
  min-width: 62px;
  margin: 0 2px 0 3px;
  padding: 0 8px;
  background: linear-gradient(#ebf3fe, #e1eaf6);
  border: 1px solid #8db2e3;
  border-bottom: 0;
  border-radius: 3px 3px 0 0;
}
.tabs button.help { min-width: 16px; padding: 0 3px 4px 0; margin-left: auto; }
.ribbon {
  flex: none;
  display: flex;
  gap: 4px;
  margin: 0 1px;
  padding: 1px 0;
  height: 90px;
  background: linear-gradient(#e8eff8 0, #d3dff0 17px, #c9d9ed 18px, #e8f0f8 100%);
  border: 1px solid #8db2e3;
  border-radius: 3px;
}
.group {
  display: flex;
  flex-direction: column;
  background: linear-gradient(#dfe9f5 0, #d3e0f0 14px, #c8daef 15px, #e3edf8 80%);
  border: 1px solid #a6c3e5;
  border-radius: 3px;
  box-shadow: inset 0 0 0 1px #f4f8fd;
}
.group h2 {
  height: 16px;
  margin: 0 1px;
  background: #c2d8f0;
  color: #3e6db5;
  text-align: center;
  line-height: 19px;
}
.tools { flex: 1; display: grid; color: #15428b; }
.g-config { grid-template-columns: 42px 42px 54px 50px 52px 52px 42px 54px; }
.g-history { grid-template-columns: 40px 80px; }
.g-db { grid-template-columns: 74px 16px 42px 58px 118px; }
.tools button {
  display: flex;
  flex-direction: column;
  align-items: center;
  gap: 4px;
  padding-top: 5px;
}
.tools svg { width: 32px; height: 32px; }
.sep { width: 1px; height: 54px; margin: 4px auto; background: #8fadd0; }
.stack { display: flex; flex-direction: column; gap: 5px; padding: 6px 0 0 4px; }
.tools .small { flex-direction: row; gap: 1px; padding: 0; white-space: nowrap; }
.tools .small svg { width: 16px; height: 16px; }

/* Work area */
.work {
  flex: 1;
  min-height: 0;
  display: flex;
  gap: 4px;
  padding: 4px 1px 4px 2px;
}
.left {
  flex: none;
  width: 205px;
  display: grid;
  grid-template-rows: minmax(0, 302fr) minmax(0, 297fr);
  gap: 4px;
}
.pane {
  display: flex;
  flex-direction: column;
  min-height: 0;
  background: #fafafa;
  border: 1px solid #6b95c9;
}
.phead {
  flex: none;
  display: flex;
  align-items: center;
  gap: 12px;
  height: 21px;
  padding: 0 6px 0 4px;
  background: linear-gradient(#e8effb 0, #d5e5f8 35%, #c3dbf7 45%, #d9f0fc 100%);
  border-bottom: 1px solid #6b95c9;
}
.phead h2 { flex: 1; }
.empty { padding: 17px 18px; color: #6f6f6f; }

.treebox {
  flex: 1;
  min-height: 0;
  display: grid;
  grid-template-columns: minmax(0, 1fr) 17px;
  grid-template-rows: minmax(0, 1fr) 17px;
  background: #f0f0f0;
}
.tree { list-style: none; background: #fff; overflow: hidden; }
.tree li { display: flex; align-items: center; height: 18px; white-space: pre; }
.tree li.sel { background: #cfdcef; }
.tree svg { width: 16px; height: 16px; margin: 0 3px; }
.tree .sel svg { height: 14px; }
.tree b { font-weight: normal; color: #00f; }
.c {
  position: relative;
  flex: none;
  width: 19px;
  height: 18px;
  --dot: repeating-linear-gradient(#888 0 1px, transparent 1px 2px);
  --dash: repeating-linear-gradient(90deg, #888 0 1px, transparent 1px 2px);
}
.c.v { background: var(--dot) 8px 0 / 1px 100% no-repeat; }
.c.v.h { background: var(--dot) 8px 0 / 1px 100% no-repeat, var(--dash) 8px 9px / 9px 1px no-repeat; }
.c.v.h.end { background: var(--dot) 8px 0 / 1px 9px no-repeat, var(--dash) 8px 9px / 9px 1px no-repeat; }
.c.first { background: var(--dash) 8px 9px / 9px 1px no-repeat; }
.c.box::before {
  content: "";
  position: absolute;
  left: 4px;
  top: 4px;
  width: 9px;
  height: 9px;
  border: 1px solid #919191;
  border-radius: 1px;
  background: linear-gradient(#3c5a9c, #3c5a9c) 1px 3px / 5px 1px no-repeat, #fff;
}

.vbar, .hbar { display: flex; align-items: center; background: #f0f0f0; }
.vbar { flex-direction: column; justify-content: space-between; padding: 5px 0 4px; }
.vbar span { width: 15px; height: 104px; margin: 4px 0 auto; background: #cdcdcd; }
.vbar .up { transform: rotate(180deg); }
.hbar { height: 17px; padding: 0 5px; }
.hbar span { height: 15px; margin: 0 auto 0 5px; background: #cdcdcd; }
.hbar .lt { transform: rotate(90deg); }
.hbar .rt { transform: rotate(-90deg); }
.tree-h span { width: 71%; }
.grid-h { flex: none; }
.grid-h span { width: 53%; }

/* Order grid */
.center {
  flex: 1;
  min-width: 0;
  display: grid;
  grid-template-columns: minmax(0, 1fr);
  grid-template-rows: minmax(0, 430fr) minmax(0, 169fr);
  gap: 4px;
}
.grid { display: flex; flex-direction: column; min-height: 0; background: #fff; border: 1px solid #6593cf; }
.ghead {
  flex: none;
  display: flex;
  align-items: center;
  gap: 4px;
  height: 29px;
  padding: 0 4px 2px;
  background: linear-gradient(#e3efff, #afd0ff);
  border-bottom: 1px solid #6593cf;
}
.ghead h2 { flex: 1; font: bold 17px/24px "Open Sans", sans-serif; color: #15428b; }
.search {
  display: flex;
  align-items: center;
  width: 181px;
  height: 20px;
  padding: 0 4px 0 2px;
  background: #fff;
  border: 1px solid #a9c4e8;
}
.search input {
  flex: 1;
  min-width: 0;
  padding: 0;
  border: 0;
  outline: 0;
  background: none;
  font: 11px/16px "Open Sans", sans-serif;
}
.search input::placeholder { color: #6f6f6f; opacity: 1; }
.dbl {
  display: flex;
  align-items: center;
  justify-content: center;
  width: 16px;
  height: 17px;
  background: #e6effb;
  border: 1px solid #8fa9cf;
  border-radius: 2px;
}
.tablebox { flex: 1; min-height: 0; overflow: hidden; margin-right: 2px; }
table { width: 1210px; table-layout: fixed; border-collapse: separate; border-spacing: 0; }
.w40 { width: 40px; }
.w80 { width: 80px; }
.w100 { width: 100px; }
.w112 { width: 112px; }
.w117 { width: 117px; }
.w121 { width: 121px; }
th {
  height: 32px;
  padding: 3px 0 0 3px;
  vertical-align: top;
  text-align: left;
  font-weight: normal;
  line-height: 14px;
  white-space: nowrap;
  background: linear-gradient(#f8fafc, #d9e0ea);
  border-right: 1px solid #9fb8d6;
  border-bottom: 1px solid #9fb8d6;
}
th small { display: block; font-size: 11px; color: #7d7d7d; }
.sort svg { float: right; margin: 2px 3px 0 0; }
td {
  height: 18px;
  padding: 1px 4px 0 3px;
  line-height: 16px;
  white-space: nowrap;
  overflow: hidden;
  text-overflow: ellipsis;
  border-right: 1px solid #deebfb;
  border-bottom: 1px solid #deebfb;
}
th:first-child, td:first-child { padding-left: 4px; }
td:nth-child(6) { padding-right: 7px; }
td svg { display: inline-block; width: 16px; height: 16px; margin: 0 2px 0 1px; vertical-align: top; }
tr:nth-child(even) td { background: #f3f3f3; }
tbody tr:nth-child(odd) td:first-child { background: #fbfbfb; }

/* Bottom docks */
.bottom { display: grid; grid-template-columns: 554fr 592fr; gap: 4px; min-height: 0; }
.dock { display: flex; flex-direction: column; min-height: 0; }
.dock .pane { flex: 1; }
.dtabs {
  flex: none;
  display: flex;
  height: 21px;
  margin: 1px 0 2px;
  border-top: 1px solid #6b95c9;
  color: #15428b;
}
.dtabs button { display: flex; align-items: center; gap: 3px; padding: 0 5px 0 3px; }
.dtabs .on {
  margin-top: -1px;
  padding: 2px 4px 0 3px;
  background: linear-gradient(#fff, #dfecfb 50%, #f6fbff);
  border: 1px solid #6b95c9;
  border-top: 0;
  border-radius: 0 0 3px 3px;
  color: #000;
}

/* Status bar */
.status {
  flex: none;
  display: flex;
  height: 21px;
  background: linear-gradient(#d7e6f9 0, #c7dcf8 8px, #b3d0f5 9px, #d3e4f9 100%);
  border-top: 1px solid #567db1;
  color: #15428b;
}
.status span { padding: 5px 7px 0 6px; border-right: 1px solid #8db2e3; }
.status span + span { padding-left: 7px; }
.grip { margin-left: auto; padding: 7px 0 0 6px; border-left: 1px solid #8db2e3; }

/* Light strip on the window's right edge */
.edge { position: absolute; right: -1px; top: 148px; width: 2px; height: 55px; background: #fff; }
```
